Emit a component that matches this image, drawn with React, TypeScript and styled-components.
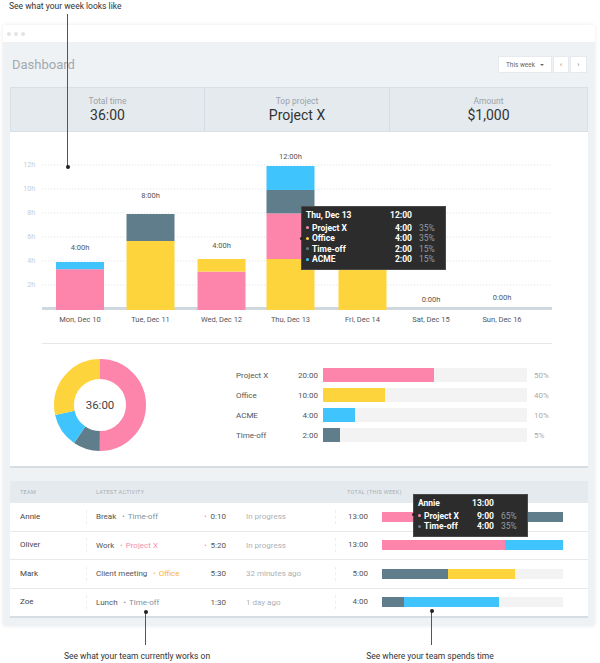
import React from 'react';
import styled, { createGlobalStyle } from 'styled-components';

const COLORS: Record<string, string> = {
  pink: '#fd84ab',
  yellow: '#fdd43c',
  blue: '#40c4fd',
  slate: '#607d8b',
};

const GlobalStyle = createGlobalStyle`
  html, body { margin: 0; padding: 0; background: #fff; }
  body { font-family: Roboto, "Liberation Sans", Arial, sans-serif; color: #333; }
  * { box-sizing: border-box; }
`;

const Page = styled.div`
  position: relative;
  width: 600px;
  height: 663px;
  overflow: hidden;
`;

const TopCaption = styled.div`
  height: 25px;
  padding-left: 9px;
  font-size: 8.5px;
  line-height: 12px;
  color: #333;
`;

const Window = styled.div`
  margin-left: 3px;
  width: 592px;
  border-radius: 3px;
  box-shadow: 0 0 4px rgba(0, 0, 0, 0.09);
  overflow: hidden;
`;

const TitleBar = styled.div`
  height: 17px;
  background: #fff;
  display: flex;
  align-items: center;
  gap: 3px;
  padding-left: 4px;
`;

const WinDot = styled.span`
  width: 4px;
  height: 4px;
  border-radius: 50%;
  background: #e2e4e6;
`;

const WindowBody = styled.div`
  background: #eef2f5;
  padding: 0 7px 10px;
  display: flex;
  flex-direction: column;
`;

const Toolbar = styled.div`
  height: 45px;
  display: flex;
  align-items: center;
  justify-content: space-between;
  padding: 0 1px 0 2px;
`;

const Title = styled.h1`
  margin: 0;
  font-size: 13px;
  font-weight: 400;
  color: #a3a9ae;
`;

const Controls = styled.div`
  display: flex;
  gap: 1px;
`;

const ControlButton = styled.div<{ $w: number }>`
  width: ${(p) => p.$w}px;
  height: 17px;
  background: #fff;
  border: 1px solid #e6eaed;
  display: flex;
  align-items: center;
  justify-content: center;
  gap: 5px;
  font-size: 6.5px;
  color: #666;
`;

const Caret = styled.span`
  width: 0;
  height: 0;
  border-left: 2px solid transparent;
  border-right: 2px solid transparent;
  border-top: 2.5px solid #666;
`;

const Cards = styled.div`
  display: flex;
  flex-direction: column;
  gap: 15px;
`;

const Card = styled.section`
  position: relative;
  background: #fff;
  box-shadow: 0 2px 0 #d6dee4;
`;

const StatsRow = styled.div`
  display: grid;
  grid-template-columns: 193px 185px 1fr;
  height: 45px;
  background: #e5eaee;
  border: 1px solid #d9e0e5;
`;

const StatCell = styled.div`
  display: flex;
  flex-direction: column;
  align-items: center;
  justify-content: center;
  gap: 1px;
  & + & {
    border-left: 1px solid #d5dce2;
  }
`;

const StatLabel = styled.div`
  font-size: 8.5px;
  color: #9ba3aa;
`;

const StatValue = styled.div`
  font-size: 14px;
  color: #333;
`;

const ChartArea = styled.div`
  position: relative;
  height: 211px;
`;

const ChartSvg = styled.svg`
  display: block;
  font-family: Roboto, "Liberation Sans", Arial, sans-serif;
`;

const Divider = styled.div`
  height: 1px;
  margin: 0 36px 0 32px;
  background: #e4e8eb;
`;

const Tooltip = styled.div<{ $left: number; $top: number; $width: number }>`
  position: absolute;
  left: ${(p) => p.$left}px;
  top: ${(p) => p.$top}px;
  width: ${(p) => p.$width}px;
  background: #2c2c2c;
  border: 1px solid #4a4a4a;
  padding: 3px 5px 4px 4px;
  display: grid;
  grid-template-columns: 1fr auto 28px;
  font-size: 8.5px;
  line-height: 10.5px;
  font-weight: 700;
  color: #fff;
  z-index: 2;
`;

const TipPointer = styled.span<{ $top: number }>`
  position: absolute;
  left: -2px;
  top: ${(p) => p.$top}px;
  width: 3px;
  height: 3px;
  border-radius: 50%;
  background: #222;
`;

const TipHead = styled.div`
  padding-bottom: 2px;
`;

const TipName = styled.div`
  display: flex;
  align-items: center;
  gap: 3px;
`;

const TipDot = styled.span<{ $c: string }>`
  width: 3px;
  height: 3px;
  border-radius: 50%;
  background: ${(p) => p.$c};
`;

const TipValue = styled.div`
  text-align: right;
`;

const TipPct = styled.div`
  padding-left: 7px;
  font-weight: 400;
  color: #9b9b9b;
`;

const DonutSection = styled.div`
  height: 122px;
  display: flex;
  align-items: center;
  padding-left: 44px;
`;

const DonutWrap = styled.div`
  position: relative;
  width: 92px;
  height: 92px;
`;

const DonutCenter = styled.div`
  position: absolute;
  inset: 0;
  display: flex;
  align-items: center;
  justify-content: center;
  font-size: 11.5px;
  color: #444;
`;

const Legend = styled.div`
  margin-left: 90px;
  display: grid;
  grid-template-columns: 60px 27px 204px auto;
  row-gap: 6px;
  align-items: center;
  font-size: 8px;
  color: #555;
`;

const LegendValue = styled.div`
  text-align: right;
  padding-right: 5px;
`;

const LegendTrack = styled.div`
  height: 14px;
  background: #f3f3f3;
  display: flex;
`;

const Fill = styled.div<{ $c: string }>`
  height: 100%;
  background: ${(p) => COLORS[p.$c]};
`;

const LegendPct = styled.div`
  padding-left: 7px;
  color: #aaa;
`;

const TEAM_COLS = '77px 109px 30px 109px 33px 195px';

const TeamHeader = styled.div`
  display: grid;
  grid-template-columns: ${TEAM_COLS};
  height: 21px;
  align-items: center;
  background: #e5eaee;
  font-size: 5.5px;
  letter-spacing: 0.3px;
  text-transform: uppercase;
  color: #a6aeb4;
`;

const HeadCell = styled.div<{ $pad: number; $span?: string }>`
  padding-left: ${(p) => p.$pad}px;
  white-space: nowrap;
  ${(p) => (p.$span ? `grid-column: ${p.$span};` : '')}
`;

const TeamRow = styled.div`
  display: grid;
  grid-template-columns: ${TEAM_COLS};
  height: 28.5px;
  align-items: center;
  border-top: 1px solid #e6eaed;
  font-size: 8px;
  color: #444;
`;

const NameCell = styled.div`
  padding-left: 10px;
  line-height: 14px;
  border-right: 1px dashed #eceef0;
`;

const ActivityCell = styled.div`
  padding-left: 9px;
  white-space: nowrap;
  color: #555;
`;

const Tag = styled.span<{ $c: string }>`
  margin-left: 6px;
  color: ${(p) => p.$c};
  &::before {
    content: '•';
    margin-right: 3px;
    font-size: 7px;
  }
`;

const TimeCell = styled.div<{ $live?: boolean }>`
  text-align: right;
  color: #555;
  &::before {
    content: ${(p) => (p.$live ? "'•'" : "''")};
    color: #fd84ab;
    margin-right: 4px;
    font-size: 7px;
  }
`;

const StatusCell = styled.div`
  padding-left: 20px;
  color: #adb1b4;
  white-space: nowrap;
`;

const TotalCell = styled.div`
  text-align: right;
  line-height: 14px;
  border-left: 1px dashed #eceef0;
  color: #555;
`;

const BarCell = styled.div`
  padding-left: 14px;
`;

const TeamTrack = styled.div`
  height: 10px;
  background: #f3f3f3;
  display: flex;
`;

const Captions = styled.div`
  display: grid;
  grid-template-columns: 274px 312px;
  padding-top: 24px;
  font-size: 8.5px;
  line-height: 12px;
  color: #333;
  text-align: center;
`;

const PointerLine = styled.div<{ $x: number; $y: number; $h: number }>`
  position: absolute;
  left: ${(p) => p.$x}px;
  top: ${(p) => p.$y}px;
  width: 1px;
  height: ${(p) => p.$h}px;
  background: #555;
  z-index: 5;
`;

const PointerDot = styled.div<{ $x: number; $y: number }>`
  position: absolute;
  left: ${(p) => p.$x - 1.5}px;
  top: ${(p) => p.$y - 1.5}px;
  width: 4px;
  height: 4px;
  border-radius: 50%;
  background: #222;
  z-index: 5;
`;

type Seg = [string, number];

const DAYS: { label: string; cx: number; value: string; vy: number; segs: Seg[] }[] = [
  { label: 'Mon, Dec 10', cx: 70, value: '4:00h', vy: 116, segs: [['pink', 3.4], ['blue', 0.6]] },
  { label: 'Tue, Dec 11', cx: 140.5, value: '8:00h', vy: 64, segs: [['yellow', 5.75], ['slate', 2.25]] },
  { label: 'Wed, Dec 12', cx: 211.5, value: '4:00h', vy: 114, segs: [['pink', 3.2], ['yellow', 1.05]] },
  { label: 'Thu, Dec 13', cx: 280.5, value: '12:00h', vy: 25, segs: [['yellow', 4.25], ['pink', 3.8], ['slate', 1.95], ['blue', 2]] },
  { label: 'Fri, Dec 14', cx: 352.5, value: '4:00h', vy: 116, segs: [['yellow', 4]] },
  { label: 'Sat, Dec 15', cx: 421, value: '0:00h', vy: 168, segs: [] },
  { label: 'Sun, Dec 16', cx: 492, value: '0:00h', vy: 166, segs: [] },
];

const BASE = 178;
const PX_PER_H = 12;

const BarChart: React.FC = () => (
  <ChartSvg width={578} height={211} viewBox="0 0 578 211">
    {[2, 4, 6, 8, 10, 12].map((h) => {
      const y = BASE - 1 - h * PX_PER_H;
      return (
        <g key={h}>
          <line x1={32} x2={542} y1={y} y2={y} stroke="#d9e0e4" strokeWidth={0.8} strokeDasharray="1.2 1.8" />
          <text x={25} y={y} textAnchor="end" dominantBaseline="middle" fontSize={7} fill="#c4ccd2">
            {h}h
          </text>
        </g>
      );
    })}
    <rect x={32} y={175} width={510} height={3} fill="#cfd8de" />
    {DAYS.map((d) => {
      let acc = 0;
      return (
        <g key={d.label}>
          {d.segs.map(([c, h], i) => {
            const y = BASE - (acc + h) * PX_PER_H;
            acc += h;
            return <rect key={i} x={d.cx - 24} y={y} width={48} height={h * PX_PER_H} fill={COLORS[c]} />;
          })}
          <text x={d.cx} y={d.vy} textAnchor="middle" dominantBaseline="middle" fontSize={7.5} fill="#555">
            {d.value}
          </text>
          <text x={d.cx} y={188} textAnchor="middle" dominantBaseline="middle" fontSize={7.5} fill="#555">
            {d.label}
          </text>
        </g>
      );
    })}
  </ChartSvg>
);

const R = 36;
const CIRC = 2 * Math.PI * R;
const DONUT: { c: string; from: number; to: number }[] = [
  { c: 'pink', from: 0, to: 180 },
  { c: 'slate', from: 180, to: 214 },
  { c: 'blue', from: 214, to: 257 },
  { c: 'yellow', from: 257, to: 360 },
];

const Donut: React.FC = () => (
  <DonutWrap>
    <svg width={92} height={92} viewBox="0 0 92 92">
      <g transform="rotate(-90 46 46)">
        {DONUT.map((s) => {
          const len = ((s.to - s.from) / 360) * CIRC;
          const off = (s.from / 360) * CIRC;
          return (
            <circle
              key={s.c}
              cx={46}
              cy={46}
              r={R}
              fill="none"
              stroke={COLORS[s.c]}
              strokeWidth={20}
              strokeDasharray={`${len} ${CIRC - len}`}
              strokeDashoffset={-off}
            />
          );
        })}
      </g>
    </svg>
    <DonutCenter>36:00</DonutCenter>
  </DonutWrap>
);

const LEGEND = [
  { name: 'Project X', value: '20:00', c: 'pink', w: 111, pct: '50%' },
  { name: 'Office', value: '10:00', c: 'yellow', w: 62, pct: '40%' },
  { name: 'ACME', value: '4:00', c: 'blue', w: 32, pct: '10%' },
  { name: 'Time-off', value: '2:00', c: 'slate', w: 17, pct: '5%' },
];

const TAG_COLORS: Record<string, string> = {
  'Time-off': '#7b939e',
  'Project X': '#f48fb1',
  Office: '#f9b233',
};

const TEAM = [
  { name: 'Annie', act: 'Break', tag: 'Time-off', live: true, time: '0:10', status: 'In progress', total: '13:00', segs: [['pink', 65], ['slate', 35]] as Seg[] },
  { name: 'Oliver', act: 'Work', tag: 'Project X', live: true, time: '5:20', status: 'In progress', total: '13:00', segs: [['pink', 68], ['blue', 32]] as Seg[] },
  { name: 'Mark', act: 'Client meeting', tag: 'Office', live: false, time: '5:30', status: '32 minutes ago', total: '5:00', segs: [['slate', 36.5], ['yellow', 37]] as Seg[] },
  { name: 'Zoe', act: 'Lunch', tag: 'Time-off', live: false, time: '1:30', status: '1 day ago', total: '4:00', segs: [['slate', 12], ['blue', 52.5]] as Seg[] },
];

const THU_TIP = [
  { name: 'Project X', c: 'pink', v: '4:00', p: '35%' },
  { name: 'Office', c: 'yellow', v: '4:00', p: '35%' },
  { name: 'Time-off', c: 'slate', v: '2:00', p: '15%' },
  { name: 'ACME', c: 'blue', v: '2:00', p: '15%' },
];

const ANNIE_TIP = [
  { name: 'Project X', c: 'pink', v: '9:00', p: '65%' },
  { name: 'Time-off', c: 'slate', v: '4:00', p: '35%' },
];

const TipRows: React.FC<{ rows: { name: string; c: string; v: string; p: string }[] }> = ({ rows }) => (
  <>
    {rows.map((r) => (
      <React.Fragment key={r.name}>
        <TipName>
          <TipDot $c={COLORS[r.c]} />
          {r.name}
        </TipName>
        <TipValue>{r.v}</TipValue>
        <TipPct>{r.p}</TipPct>
      </React.Fragment>
    ))}
  </>
);

export default function App() {
  return (
    <Page>
      <GlobalStyle />
      <TopCaption>See what your week looks like</TopCaption>
      <Window>
        <TitleBar>
          <WinDot />
          <WinDot />
          <WinDot />
        </TitleBar>
        <WindowBody>
          <Toolbar>
            <Title>Dashboard</Title>
            <Controls>
              <ControlButton $w={54}>
                This week <Caret />
              </ControlButton>
              <ControlButton $w={16}>‹</ControlButton>
              <ControlButton $w={17}>›</ControlButton>
            </Controls>
          </Toolbar>
          <Cards>
            <Card>
              <StatsRow>
                <StatCell>
                  <StatLabel>Total time</StatLabel>
                  <StatValue>36:00</StatValue>
                </StatCell>
                <StatCell>
                  <StatLabel>Top project</StatLabel>
                  <StatValue>Project X</StatValue>
                </StatCell>
                <StatCell>
                  <StatLabel>Amount</StatLabel>
                  <StatValue>$1,000</StatValue>
                </StatCell>
              </StatsRow>
              <ChartArea>
                <BarChart />
                <Tooltip $left={291} $top={74} $width={145}>
                  <TipPointer $top={30} />
                  <TipHead>Thu, Dec 13</TipHead>
                  <TipValue>12:00</TipValue>
                  <TipPct />
                  <TipRows rows={THU_TIP} />
                </Tooltip>
              </ChartArea>
              <Divider />
              <DonutSection>
                <Donut />
                <Legend>
                  {LEGEND.map((l) => (
                    <React.Fragment key={l.name}>
                      <div>{l.name}</div>
                      <LegendValue>{l.value}</LegendValue>
                      <LegendTrack>
                        <Fill $c={l.c} style={{ width: l.w }} />
                      </LegendTrack>
                      <LegendPct>{l.pct}</LegendPct>
                    </React.Fragment>
                  ))}
                </Legend>
              </DonutSection>
            </Card>
            <Card>
              <TeamHeader>
                <HeadCell $pad={10}>Team</HeadCell>
                <HeadCell $pad={9}>Latest activity</HeadCell>
                <div />
                <div />
                <HeadCell $pad={12} $span="5 / 7">Total (this week)</HeadCell>
              </TeamHeader>
              {TEAM.map((m) => (
                <TeamRow key={m.name}>
                  <NameCell>{m.name}</NameCell>
                  <ActivityCell>
                    {m.act}
                    <Tag $c={TAG_COLORS[m.tag]}>{m.tag}</Tag>
                  </ActivityCell>
                  <TimeCell $live={m.live}>{m.time}</TimeCell>
                  <StatusCell>{m.status}</StatusCell>
                  <TotalCell>{m.total}</TotalCell>
                  <BarCell>
                    <TeamTrack>
                      {m.segs.map(([c, w], i) => (
                        <Fill key={i} $c={c} style={{ width: `${w}%` }} />
                      ))}
                    </TeamTrack>
                  </BarCell>
                </TeamRow>
              ))}
              <Tooltip $left={403} $top={13} $width={115}>
                <TipPointer $top={18} />
                <TipHead>Annie</TipHead>
                <TipValue>13:00</TipValue>
                <TipPct />
                <TipRows rows={ANNIE_TIP} />
              </Tooltip>
            </Card>
          </Cards>
        </WindowBody>
      </Window>
      <Captions>
        <div>See what your team currently works on</div>
        <div>See where your team spends time</div>
      </Captions>
      <PointerLine $x={67} $y={14} $h={152} />
      <PointerDot $x={67} $y={166} />
      <PointerLine $x={145} $y={611} $h={34} />
      <PointerDot $x={145} $y={611} />
      <PointerLine $x={431} $y={610} $h={35} />
      <PointerDot $x={431} $y={610} />
    </Page>
  );
}
